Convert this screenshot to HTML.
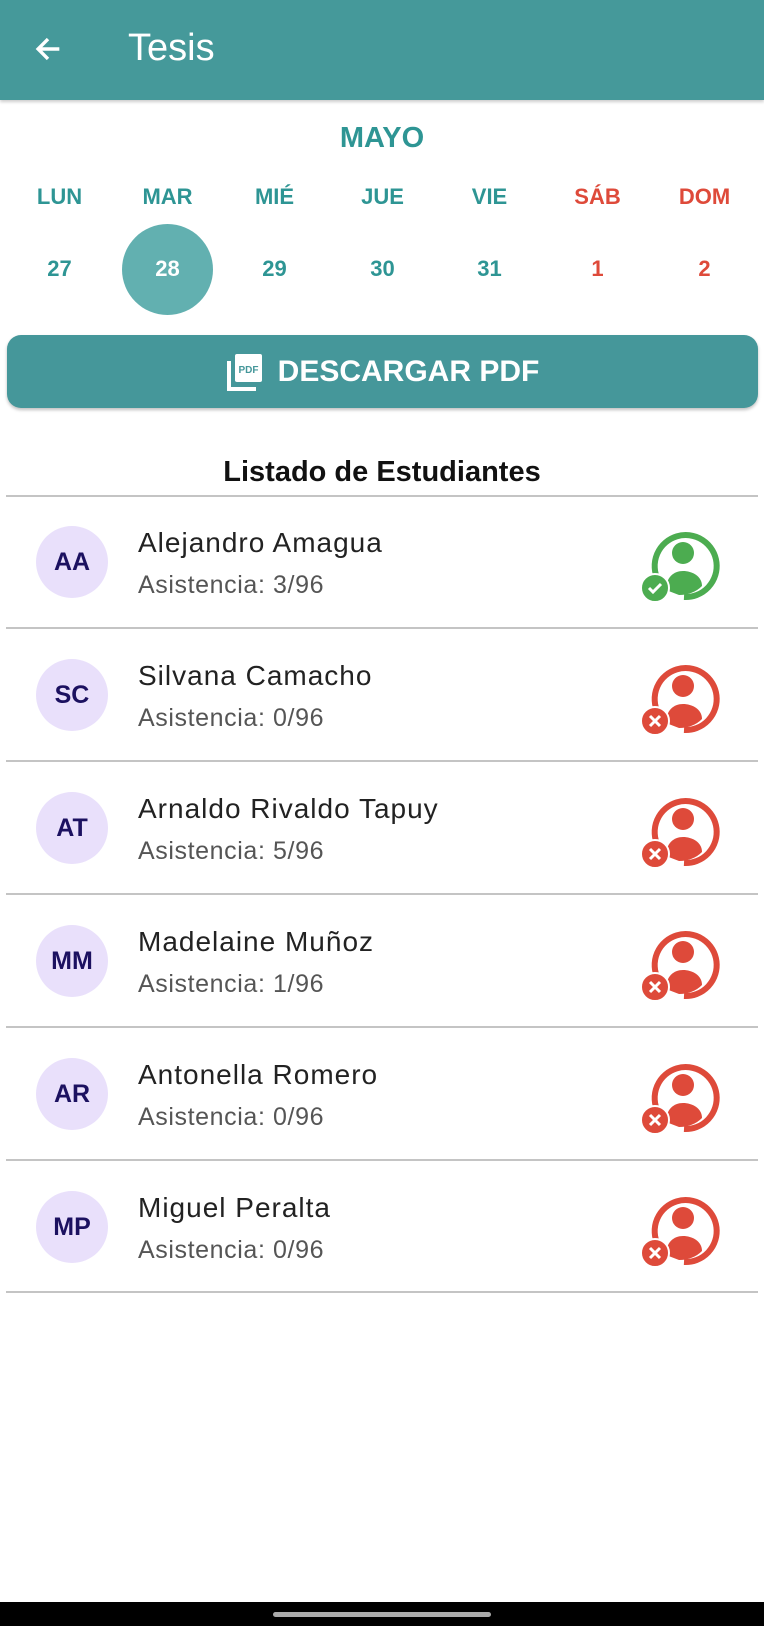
<!DOCTYPE html>
<html><head><meta charset="utf-8"><style>
*{margin:0;padding:0;box-sizing:border-box}
body{width:764px;height:1626px;background:#fff;font-family:"Liberation Sans",sans-serif;position:relative;overflow:hidden}
.hdr{position:absolute;left:0;top:0;width:764px;height:100px;background:#45999a;box-shadow:0 2px 3px rgba(0,0,0,.2)}
.hdr .t{position:absolute;left:128px;top:27px;color:#fff;font-size:38px}
.mayo{position:absolute;top:122px;width:764px;text-align:center;color:#2e9594;font-size:29px;font-weight:bold}
.col{position:absolute;width:107px;text-align:center;font-size:22px;font-weight:bold;color:#2e9594}
.red{color:#de4a3a}
.circ{position:absolute;left:122px;top:224px;width:91px;height:91px;border-radius:50%;background:#62b0b0}
.btn{position:absolute;left:7px;top:335px;width:751px;height:73px;border-radius:14px;background:#45979a;box-shadow:0 2px 3px rgba(0,0,0,.25);color:#fff;font-size:30px;font-weight:bold;display:flex;align-items:center;justify-content:center;gap:14px}
.lt{position:absolute;top:456px;width:764px;text-align:center;font-size:29px;font-weight:bold;color:#111}
.line{position:absolute;left:6px;width:752px;height:2px;background:#c4c4c4}
.av{position:absolute;left:36px;width:72px;height:72px;border-radius:50%;background:#e9e0fb;color:#1c1160;font-weight:bold;font-size:25px;display:flex;align-items:center;justify-content:center}
.nm{position:absolute;left:138px;font-size:28px;color:#222;letter-spacing:1px}
.sb{position:absolute;left:138px;font-size:25px;color:#555;letter-spacing:.6px}
.ic{position:absolute;left:638px;width:80px;height:80px;overflow:visible}
</style></head><body>
<div class="hdr">
<svg style="position:absolute;left:31px;top:32px" width="34" height="34" viewBox="0 0 24 24"><path d="M20 12H5M12 5l-7 7 7 7" stroke="#fff" stroke-width="2.4" fill="none"/></svg>
<div class="t">Tesis</div></div>
<div class="mayo">MAYO</div>
<div class="circ"></div>
<div class="col" style="left:6px;top:184px">LUN</div>
<div class="col" style="left:114px;top:184px">MAR</div>
<div class="col" style="left:221px;top:184px">MIÉ</div>
<div class="col" style="left:329px;top:184px">JUE</div>
<div class="col" style="left:436px;top:184px">VIE</div>
<div class="col red" style="left:544px;top:184px">SÁB</div>
<div class="col red" style="left:651px;top:184px">DOM</div>
<div class="col" style="left:6px;top:256px">27</div>
<div class="col" style="left:114px;top:256px;color:#fff">28</div>
<div class="col" style="left:221px;top:256px">29</div>
<div class="col" style="left:329px;top:256px">30</div>
<div class="col" style="left:436px;top:256px">31</div>
<div class="col red" style="left:544px;top:256px">1</div>
<div class="col red" style="left:651px;top:256px">2</div>
<div class="btn"><svg width="38" height="40" viewBox="0 0 38 40"><rect x="9" y="2" width="27" height="28" rx="2" fill="#fff"/><text x="22.5" y="21" font-size="10" font-weight="bold" fill="#45979a" text-anchor="middle" font-family="Liberation Sans">PDF</text><path d="M3 9v28h27" stroke="#fff" stroke-width="4" fill="none"/></svg>DESCARGAR PDF</div>
<div class="lt">Listado de Estudiantes</div>
<div class="line" style="top:495px"></div>

<svg width="0" height="0" style="position:absolute"><defs>
<g id="p"><path d="M20 54A31 31 0 1 1 46 71" stroke="currentColor" stroke-width="6" fill="none"/><circle cx="45" cy="27" r="11" fill="currentColor"/><path d="M28 64c0-13 8-19 17-19s19 5 19 15c-6 6-14 9-23 9z" fill="currentColor"/></g>
</defs></svg>

<div class="av" style="top:526px">AA</div><div class="nm" style="top:527px">Alejandro Amagua</div><div class="sb" style="top:571px">Asistencia: 3/96</div>
<svg class="ic" style="top:526px;color:#4cac50" viewBox="0 0 80 80"><use href="#p"/><circle cx="17" cy="62" r="14" fill="#4cac50" stroke="#fff" stroke-width="2"/><path d="M11 62l4 4 8-8" stroke="#fff" stroke-width="3" fill="none"/></svg>
<div class="line" style="top:627px"></div>

<div class="av" style="top:659px">SC</div><div class="nm" style="top:660px">Silvana Camacho</div><div class="sb" style="top:704px">Asistencia: 0/96</div>
<svg class="ic" style="top:659px;color:#de4a3a" viewBox="0 0 80 80"><use href="#p"/><circle cx="17" cy="62" r="14" fill="#de4a3a" stroke="#fff" stroke-width="2"/><path d="M12 57l10 10M22 57l-10 10" stroke="#fff" stroke-width="3"/></svg>
<div class="line" style="top:760px"></div>

<div class="av" style="top:792px">AT</div><div class="nm" style="top:793px">Arnaldo Rivaldo Tapuy</div><div class="sb" style="top:837px">Asistencia: 5/96</div>
<svg class="ic" style="top:792px;color:#de4a3a" viewBox="0 0 80 80"><use href="#p"/><circle cx="17" cy="62" r="14" fill="#de4a3a" stroke="#fff" stroke-width="2"/><path d="M12 57l10 10M22 57l-10 10" stroke="#fff" stroke-width="3"/></svg>
<div class="line" style="top:893px"></div>

<div class="av" style="top:925px">MM</div><div class="nm" style="top:926px">Madelaine Muñoz</div><div class="sb" style="top:970px">Asistencia: 1/96</div>
<svg class="ic" style="top:925px;color:#de4a3a" viewBox="0 0 80 80"><use href="#p"/><circle cx="17" cy="62" r="14" fill="#de4a3a" stroke="#fff" stroke-width="2"/><path d="M12 57l10 10M22 57l-10 10" stroke="#fff" stroke-width="3"/></svg>
<div class="line" style="top:1026px"></div>

<div class="av" style="top:1058px">AR</div><div class="nm" style="top:1059px">Antonella Romero</div><div class="sb" style="top:1103px">Asistencia: 0/96</div>
<svg class="ic" style="top:1058px;color:#de4a3a" viewBox="0 0 80 80"><use href="#p"/><circle cx="17" cy="62" r="14" fill="#de4a3a" stroke="#fff" stroke-width="2"/><path d="M12 57l10 10M22 57l-10 10" stroke="#fff" stroke-width="3"/></svg>
<div class="line" style="top:1159px"></div>

<div class="av" style="top:1191px">MP</div><div class="nm" style="top:1192px">Miguel Peralta</div><div class="sb" style="top:1236px">Asistencia: 0/96</div>
<svg class="ic" style="top:1191px;color:#de4a3a" viewBox="0 0 80 80"><use href="#p"/><circle cx="17" cy="62" r="14" fill="#de4a3a" stroke="#fff" stroke-width="2"/><path d="M12 57l10 10M22 57l-10 10" stroke="#fff" stroke-width="3"/></svg>
<div class="line" style="top:1291px"></div>

<div style="position:absolute;left:0;top:1602px;width:764px;height:24px;background:#000"></div>
<div style="position:absolute;left:273px;top:1612px;width:218px;height:5px;border-radius:3px;background:#aaa"></div>
</body></html>
